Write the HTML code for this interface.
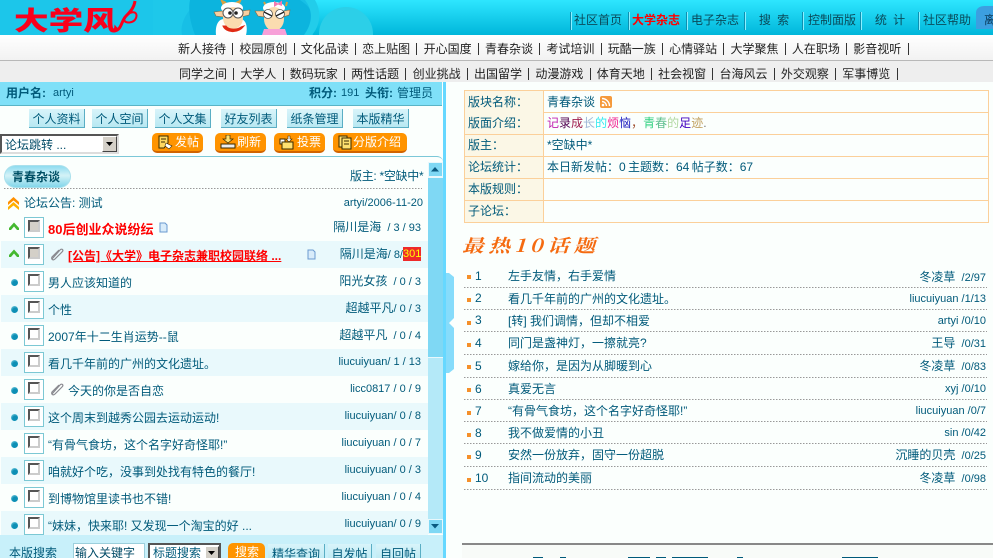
<!DOCTYPE html>
<html lang="zh"><head><meta charset="utf-8"><title>青春杂谈</title>
<style>
*{box-sizing:border-box}
html,body{margin:0;padding:0;width:993px;height:558px;overflow:hidden;background:#fbfffd}
body{position:relative;font:12px/14px "Liberation Sans","WenQuanYi Zen Hei","Noto Sans CJK SC",sans-serif;color:#005a7a}
div,span.a,svg.a{position:absolute}
.t{white-space:nowrap}
.c{font-size:12px}
.nav{left:0;white-space:nowrap;color:#222}
.nav i{display:inline-block;width:1px;height:12px;background:#333;margin:0 6.2px;vertical-align:-2px}
.top{top:13px;width:58px;text-align:center;color:#0a4a5a;white-space:nowrap}
.sep{top:12px;width:2px;height:18px;background:linear-gradient(90deg,#0e8fb0 50%,#8cf0ff 50%)}
.b1{top:109px;height:19px;text-align:center;line-height:20px;background:linear-gradient(#d8f4fa,#b8e8f2);border-right:1px solid #5aaec4;border-bottom:1px solid #5aaec4;color:#005a7a}
.ob{top:133px;height:20px;border-radius:5px;background:#ff9400;border-bottom:2px solid #d26400;color:#fff;line-height:18px;white-space:nowrap}
.ob svg{position:absolute;left:5px;top:2px}
.ob span{position:absolute;top:0}
.r{left:1px;width:427px;height:27px}
.r.k{background:#e9f9fc}
.ball{left:10px;top:11px;width:7px;height:7px;border-radius:50%;background:radial-gradient(circle at 60% 65%,#0d8fb5 40%,#9fe3ef)}
.box{left:23px;top:3px;width:20px;height:21px;border:1px solid #7cc8d4;background:#fff}
.box b{position:absolute;left:3px;top:2px;width:12px;height:12px;border:2px solid;border-color:#555 #ccc #ccc #555;background:#fff}
.box.g b{background:#d4d0c8}
.ti{top:8px;left:47px;white-space:nowrap;color:#005a7a}
.au{top:6px;right:7px;white-space:nowrap;text-align:right;color:#005a7a;font-size:11px}
.arr{left:7px;top:8px}
.clip{left:48px;top:5px}
.cell{left:464px;width:525px;height:23px;border:1px solid #fbd09a;border-top:none}
.cell .h{left:0;top:0;width:79px;height:22px;background:#fbf7e6;border-right:1px solid #fbd09a;padding:4px 0 0 3px;white-space:nowrap;letter-spacing:0}
.cell .v{left:82px;top:4px;white-space:nowrap}
.hr{left:464px;width:523px;height:1px;background-image:linear-gradient(90deg,#999 50%,transparent 50%);background-size:3px 1px}
.sq{left:467px;width:4px;height:4px;background:#f5902a}
.n{left:475px;white-space:nowrap}
.l{left:508px;white-space:nowrap}
.rr{right:7px;white-space:nowrap;text-align:right;font-size:11px}
</style></head><body>

<!-- header -->
<div style="left:0;top:0;width:993px;height:35px;background:linear-gradient(#2ee6ff,#00b6da);overflow:hidden">
<svg class="a" style="left:0;top:0" width="993" height="35" viewBox="0 0 993 35">
<rect x="0" y="0" width="153" height="35" fill="#1cc6ea"/>
<rect x="153" y="0" width="160" height="35" fill="#17bfe6"/>
<path d="M153 0H200C185 12 180 24 182 35H153Z" fill="#1ec8ea"/>
<path d="M190 0H300C318 12 316 26 306 35H195C190 22 188 10 190 0Z" fill="#0cb4de"/>
<path d="M305 0H315C322 12 320 26 312 35H304C312 24 314 12 305 0Z" fill="#22cdea"/>
<ellipse cx="346" cy="34" rx="27" ry="27" fill="#2ccfe8"/>
<!-- logo flourish -->
<path d="M114 31C122 30 121 21 126 16C130 12 134 8 135 1" fill="none" stroke="#f8001c" stroke-width="3"/>
<path d="M124 20C128 10 139 10 136 18C134 23 126 24 124 20" fill="none" stroke="#f8001c" stroke-width="2"/>
<!-- sheep 1 -->
<path d="M224 6L222 1L226 3M238 6L240 1L236 3" fill="none" stroke="#d9a040" stroke-width="2"/>
<ellipse cx="232" cy="8" rx="11" ry="6" fill="#fff"/>
<path d="M223 11L214 12L216 16L224 17ZM242 11L250 10L249 15L241 17Z" fill="#f8cfa0" stroke="#8a6a40" stroke-width=".6"/>
<path d="M216 35C215 26 218 19 224 19H240C246 19 248 27 246 35Z" fill="#fff"/>
<ellipse cx="233" cy="18" rx="10" ry="11" fill="#fbdcb0"/>
<circle cx="228" cy="13" r="5" fill="#fff" stroke="#555" stroke-width="1"/>
<circle cx="238" cy="13" r="5" fill="#fff" stroke="#555" stroke-width="1"/>
<circle cx="230" cy="13" r="1.8" fill="#222"/><circle cx="236" cy="13" r="1.8" fill="#222"/>
<path d="M223 26C226 33 238 34 244 26L241 27C237 30 229 30 226 26Z" fill="#e02a14" stroke="#e02a14"/>
<!-- sheep 2 -->
<path d="M266 6L264 2M286 6L287 2" stroke="#d9a040" stroke-width="2"/>
<ellipse cx="274" cy="8" rx="11" ry="6" fill="#fff"/>
<path d="M274 1L278 3.5L282 0.5V6L278 4.5L274 7Z" fill="#f47ab0"/>
<path d="M264 11L255 11L258 16L265 17ZM284 11L290 10L289 15L283 17Z" fill="#f8cfa0" stroke="#8a6a40" stroke-width=".6"/>
<ellipse cx="274" cy="19" rx="10" ry="12" fill="#fbdcb0"/>
<circle cx="268" cy="14" r="4.5" fill="#fff" stroke="#555" stroke-width=".8"/><circle cx="280" cy="14" r="4.5" fill="#fff" stroke="#555" stroke-width=".8"/>
<path d="M264 12L272 16M276 16L284 12" stroke="#222" stroke-width="1.4"/>
<path d="M262 35L264 29H285L287 35Z" fill="#f7a0d8"/>
<!-- right button -->
<path d="M976 35V13C976 8 980 6 985 6H993V29H976Z" fill="#3c9fe0"/>
</svg>
<div class="t" style="left:14px;top:5px;font:900 26px/30px 'Noto Sans CJK SC',sans-serif;color:#f8001c;transform:scaleX(1.33);transform-origin:0 0">大学风</div>
<div class="sep" style="left:570px"></div><div class="top" style="left:569px">社区首页</div>
<div class="sep" style="left:628px"></div><div class="top" style="left:627px;color:#f00;font-weight:bold">大学杂志</div>
<div class="sep" style="left:686px"></div><div class="top" style="left:686px">电子杂志</div>
<div class="sep" style="left:744px"></div><div class="top" style="left:745px;word-spacing:3px">搜 索</div>
<div class="sep" style="left:802px"></div><div class="top" style="left:803px">控制面版</div>
<div class="sep" style="left:860px"></div><div class="top" style="left:861px;word-spacing:3px">统 计</div>
<div class="sep" style="left:918px"></div><div class="top" style="left:918px">社区帮助</div>
<div class="t" style="left:984px;top:13px;color:#0a3a5a">离</div>
</div>

<!-- sub navs -->
<div style="left:0;top:35px;width:993px;height:25px;background:linear-gradient(#fff,#f2f2f2)"></div>
<div style="left:0;top:60px;width:993px;height:1px;background:#b8b8b8"></div>
<div style="left:0;top:61px;width:993px;height:21px;background:#eeeeee"></div>
<div class="nav" style="left:178px;top:42px">新人接待<i></i>校园原创<i></i>文化品读<i></i>恋上贴图<i></i>开心国度<i></i>青春杂谈<i></i>考试培训<i></i>玩酷一族<i></i>心情驿站<i></i>大学聚焦<i></i>人在职场<i></i>影音视听<i></i></div>
<div class="nav" style="left:179px;top:67px">同学之间<i></i>大学人<i></i>数码玩家<i></i>两性话题<i></i>创业挑战<i></i>出国留学<i></i>动漫游戏<i></i>体育天地<i></i>社会视窗<i></i>台海风云<i></i>外交观察<i></i>军事博览<i></i></div>

<!-- left column -->
<div style="left:0;top:82px;width:442px;height:476px;background:#fbfffd"></div>
<div style="left:443px;top:82px;width:3px;height:476px;background:#66d8ff"></div>
<div style="left:0;top:82px;width:442px;height:24px;background:#7fe0f8;border-bottom:1px solid #5ab4c6"></div>
<div class="t" style="left:6px;top:86px;font-weight:bold">用户名:</div>
<div class="t" style="left:53px;top:86px;font-size:11px">artyi</div>
<div class="t" style="left:309px;top:86px;font-weight:bold">积分:</div>
<div class="t" style="left:341px;top:86px;font-size:11px">191</div>
<div class="t" style="left:365px;top:86px;font-weight:bold">头衔:</div>
<div class="t" style="left:397px;top:86px">管理员</div>

<div class="b1" style="left:29px;width:56px">个人资料</div>
<div class="b1" style="left:92px;width:56px">个人空间</div>
<div class="b1" style="left:155px;width:56px">个人文集</div>
<div class="b1" style="left:221px;width:56px">好友列表</div>
<div class="b1" style="left:287px;width:56px">纸条管理</div>
<div class="b1" style="left:353px;width:56px">本版精华</div>

<div style="left:0;top:134px;width:119px;height:20px;border:2px solid;border-color:#555 #ddd #ddd #555;background:#fff"></div>
<div class="t" style="left:5px;top:138px;color:#004a66">论坛跳转 ...</div>
<div style="left:102px;top:136px;width:15px;height:16px;background:#d4d0c8;border:1px solid;border-color:#fff #444 #444 #fff"></div>
<svg class="a" style="left:106px;top:142px" width="8" height="5"><path d="M0 0H7L3.5 4Z" fill="#000"/></svg>

<div class="ob" style="left:152px;width:51px"><svg width="16" height="15"><path d="M2 1H11V8L7 13H2Z" fill="#ffd860" stroke="#3a2a00"/><path d="M4 4H9M4 7H8" stroke="#3a2a00"/><path d="M9 8L15 11L12 14L8 11Z" fill="#fff" stroke="#3a2a00" stroke-width=".6"/></svg><span style="left:23px">发帖</span></div>
<div class="ob" style="left:215px;width:51px"><svg width="17" height="15"><path d="M6 0H10V4H13L8 8L3 4H6Z" fill="#ffe070" stroke="#3a2a00" stroke-width=".7"/><rect x="1" y="9" width="14" height="4" fill="#eee" stroke="#3a2a00"/></svg><span style="left:22px">刷新</span></div>
<div class="ob" style="left:274px;width:51px"><svg width="16" height="15"><rect x="1" y="4" width="5" height="5" fill="#fff" stroke="#3a2a00"/><rect x="3" y="7" width="11" height="7" fill="#ffe070" stroke="#3a2a00"/><path d="M9 1H11V4H13L10 7L7 4H9Z" fill="#fff" stroke="#3a2a00" stroke-width=".6"/></svg><span style="left:23px">投票</span></div>
<div class="ob" style="left:333px;width:74px"><svg width="14" height="15"><rect x="1" y="1" width="8" height="11" fill="#ffe070" stroke="#3a2a00"/><rect x="4" y="3" width="9" height="11" fill="#ffe070" stroke="#3a2a00"/><path d="M6 6H11M6 9H11" stroke="#3a2a00"/></svg><span style="left:20px">分版介绍</span></div>

<!-- topic panel -->
<div style="left:0;top:156px;width:443px;height:380px;border-top:1px solid #7cc8d8;border-top-right-radius:6px;background:#fbfffd"></div>
<div style="left:4px;top:165px;width:67px;height:23px;border-radius:12px;background:linear-gradient(#8edcf0,#d4f2f7 45%,#82d6ea);border:1px solid #a9e0ec"></div>
<div class="t" style="left:12px;top:170px;font-weight:bold;color:#005066">青春杂谈</div>
<div class="t" style="left:350px;top:169px;letter-spacing:-.3px">版主: *空缺中*</div>
<div style="left:4px;top:188px;width:418px;height:1px;background-image:linear-gradient(90deg,#999 50%,transparent 50%);background-size:3px 1px"></div>

<svg class="a" style="left:7px;top:196px" width="13" height="15"><path d="M1 6L6.5 1L12 6V9L6.5 4.5L1 9Z" fill="#ff9000"/><path d="M1 11L6.5 6L12 11V14L6.5 9.5L1 14Z" fill="#ffb000"/></svg>
<div class="t" style="left:24px;top:196px">论坛公告: 测试</div>
<div class="t" style="right:570px;top:196px;font-size:11px">artyi/2006-11-20</div>

<!-- rows -->
<div class="r" style="top:214px">
<svg class="a arr" width="12" height="8"><path d="M1 6L6 0.5L11 6V8H9L6 4.5L3 8H1Z" fill="#44b830"/></svg>
<div class="box g"><b></b></div>
<div class="ti" style="font-size:13px;font-weight:bold;color:#f00;top:9px">80后创业众说纷纭</div>
<svg class="a" style="left:158px;top:8px" width="9" height="11"><path d="M1 1H6L8 3V10H1Z" fill="#d8ecfa" stroke="#6a9ad0"/></svg>
<div class="au" style="top:6px"><span class="c">隔川是海</span>&nbsp; / 3 / 93</div>
</div>
<div class="r k" style="top:241px">
<svg class="a arr" width="12" height="8"><path d="M1 6L6 0.5L11 6V8H9L6 4.5L3 8H1Z" fill="#44b830"/></svg>
<div class="box g"><b></b></div>
<svg class="a clip" width="15" height="16"><path d="M3 13L11 4C13 2 15 4 13 6L6 13C4 15 2 13 3 11L10 4" fill="none" stroke="#8a8a90" stroke-width="1.2"/></svg>
<div class="ti" style="left:67px;top:8px;width:239px;font-weight:bold;color:#f00;text-decoration:underline;overflow:hidden">[公告]《大学》电子杂志兼职校园联络 ...</div>
<svg class="a" style="left:306px;top:8px" width="9" height="11"><path d="M1 1H6L8 3V10H1Z" fill="#d8ecfa" stroke="#6a9ad0"/></svg>
<div class="au" style="right:25px"><span class="c">隔川是海</span>/ 8/</div>
<div class="t" style="left:402px;top:6px;width:18px;height:14px;background:#ee2a2a;color:#ff0;text-align:center;font-size:11px">301</div>
</div>
<div class="r" style="top:268px"><div class="ball"></div><div class="box"><b></b></div><div class="ti">男人应该知道的</div><div class="au"><span class="c">阳光女孩</span>&nbsp; / 0 / 3</div></div>
<div class="r k" style="top:295px"><div class="ball"></div><div class="box"><b></b></div><div class="ti">个性</div><div class="au"><span class="c">超越平凡</span>/ 0 / 3</div></div>
<div class="r" style="top:322px"><div class="ball"></div><div class="box"><b></b></div><div class="ti">2007年十二生肖运势--鼠</div><div class="au"><span class="c">超越平凡</span>&nbsp; / 0 / 4</div></div>
<div class="r k" style="top:349px"><div class="ball"></div><div class="box"><b></b></div><div class="ti">看几千年前的广州的文化遗址。</div><div class="au">liucuiyuan/ 1 / 13</div></div>
<div class="r" style="top:376px"><div class="ball"></div><div class="box"><b></b></div>
<svg class="a clip" width="15" height="16"><path d="M3 13L11 4C13 2 15 4 13 6L6 13C4 15 2 13 3 11L10 4" fill="none" stroke="#8a8a90" stroke-width="1.2"/></svg>
<div class="ti" style="left:67px">今天的你是否自恋</div><div class="au">licc0817 / 0 / 9</div></div>
<div class="r k" style="top:403px"><div class="ball"></div><div class="box"><b></b></div><div class="ti">这个周末到越秀公园去运动运动!</div><div class="au">liucuiyuan/ 0 / 8</div></div>
<div class="r" style="top:430px"><div class="ball"></div><div class="box"><b></b></div><div class="ti">“有骨气食坊，这个名字好奇怪耶!”</div><div class="au">liucuiyuan / 0 / 7</div></div>
<div class="r k" style="top:457px"><div class="ball"></div><div class="box"><b></b></div><div class="ti">咱就好个吃，没事到处找有特色的餐厅!</div><div class="au">liucuiyuan/ 0 / 3</div></div>
<div class="r" style="top:484px"><div class="ball"></div><div class="box"><b></b></div><div class="ti">到博物馆里读书也不错!</div><div class="au">liucuiyuan / 0 / 4</div></div>
<div class="r k" style="top:511px;height:24px"><div class="ball"></div><div class="box"><b></b></div><div class="ti">“妹妹，快来耶! 又发现一个淘宝的好 ...</div><div class="au">liucuiyuan/ 0 / 9</div></div>

<!-- scrollbar -->
<div style="left:428px;top:162px;width:15px;height:372px;background:#b4e9f8"></div>
<div style="left:428px;top:177px;width:15px;height:181px;background:#7fd8f4;border:1px solid #e8f8fc;border-width:1px 0 1px 0"></div>
<div style="left:428px;top:162px;width:15px;height:15px;background:#7fd8f4;border:1px solid #e8f8fc"></div>
<svg class="a" style="left:431px;top:167px" width="9" height="5"><path d="M0 4.5H8L4 0Z" fill="#0a5a80"/></svg>
<div style="left:428px;top:519px;width:15px;height:15px;background:#7fd8f4;border:1px solid #e8f8fc"></div>
<svg class="a" style="left:431px;top:524px" width="9" height="5"><path d="M0 0H8L4 4.5Z" fill="#0a5a80"/></svg>

<!-- bottom search -->
<div style="left:0;top:535px;width:443px;height:23px;background:#c8f0fa"></div>
<div class="t" style="left:9px;top:546px">本版搜索</div>
<div style="left:73px;top:543px;width:72px;height:20px;background:#fff;border:1px solid #9ccfdc"></div>
<div class="t" style="left:75px;top:546px;color:#004a66">输入关键字</div>
<div style="left:148px;top:543px;width:73px;height:20px;background:#fff;border:2px solid #555"></div>
<div class="t" style="left:153px;top:546px">标题搜索</div>
<div style="left:205px;top:546px;width:14px;height:14px;background:#d4d0c8;border:1px solid;border-color:#fff #444 #444 #fff"></div>
<svg class="a" style="left:208px;top:551px" width="8" height="5"><path d="M0 0H7L3.5 4Z" fill="#000"/></svg>
<div style="left:228px;top:543px;width:37px;height:20px;background:#ff9400;border-radius:5px 5px 0 0"></div>
<div class="t" style="left:235px;top:545px;color:#fff">搜索</div>
<div class="b1" style="left:268px;top:544px;width:57px;height:20px">精华查询</div>
<div class="b1" style="left:328px;top:544px;width:44px;height:20px">自发帖</div>
<div class="b1" style="left:376px;top:544px;width:45px;height:20px">自回帖</div>

<!-- divider handle -->
<svg class="a" style="left:446px;top:273px" width="9" height="101"><path d="M0 0H3L8 4V45L3 50L8 55V96L3 100H0Z" fill="#86dcfb"/></svg>

<!-- right info table -->
<div class="cell" style="top:90px;height:23px;border-top:1px solid #fbd09a"><div class="h">版块名称：</div><div class="v" style="top:4px">青春杂谈</div>
<svg class="a" style="left:135px;top:5px" width="12" height="12"><rect width="12" height="12" rx="2" fill="#f59a3c"/><circle cx="3" cy="9" r="1.3" fill="#fff"/><path d="M2 5.5A4.5 4.5 0 0 1 6.5 10M2 2.5A7.5 7.5 0 0 1 9.5 10" fill="none" stroke="#fff" stroke-width="1.4"/></svg></div>
<div class="cell" style="top:113px;height:22px"><div class="h" style="height:21px;padding-top:3px">版面介绍：</div><div class="v" style="top:3px"><span style="color:#c020b0">记</span><span style="color:#500050">录</span><span style="color:#a02050">成</span><span style="color:#a0b8d8">长</span><span style="color:#30e8f0">的</span><span style="color:#f02090">烦</span><span style="color:#2020c0">恼</span><span style="color:#a05030">，</span><span style="color:#30d080">青</span><span style="color:#60c090">春</span><span style="color:#b0d8a0">的</span><span style="color:#4000c0">足</span><span style="color:#c0a060">迹</span><span style="color:#777">.</span></div></div>
<div class="cell" style="top:135px;height:22px"><div class="h" style="height:21px;padding-top:3px">版主：</div><div class="v" style="top:3px">*空缺中*</div></div>
<div class="cell" style="top:157px;height:22px"><div class="h" style="height:21px;padding-top:3px">论坛统计：</div><div class="v" style="top:3px;word-spacing:-1px">本日新发帖：0 主题数：64 帖子数：67</div></div>
<div class="cell" style="top:179px;height:22px"><div class="h" style="height:21px;padding-top:3px">本版规则：</div></div>
<div class="cell" style="top:201px;height:22px"><div class="h" style="height:21px;padding-top:3px">子论坛：</div></div>

<div class="t" style="left:462px;top:235px;font:italic bold 18px/20px 'Noto Serif CJK SC',serif;color:#f56a10;letter-spacing:4px;transform:scaleX(1.2);transform-origin:0 0">最热10话题</div>

<!-- hot list -->
<div class="sq" style="top:275px"></div><div class="n" style="top:269px">1</div><div class="l" style="top:269px">左手友情，右手爱情</div><div class="rr" style="top:270px"><span class="c">冬凌草</span>&nbsp; /2/97</div><div class="hr" style="top:287px"></div>
<div class="sq" style="top:298px"></div><div class="n" style="top:291px">2</div><div class="l" style="top:292px">看几千年前的广州的文化遗址。</div><div class="rr" style="top:292px">liucuiyuan /1/13</div><div class="hr" style="top:309px"></div>
<div class="sq" style="top:321px"></div><div class="n" style="top:313px">3</div><div class="l" style="top:314px">[转] 我们调情，但却不相爱</div><div class="rr" style="top:314px">artyi /0/10</div><div class="hr" style="top:331px"></div>
<div class="sq" style="top:343px"></div><div class="n" style="top:336px">4</div><div class="l" style="top:336px">同门是盏神灯，一擦就亮?</div><div class="rr" style="top:336px"><span class="c">王导</span>&nbsp; /0/31</div><div class="hr" style="top:354px"></div>
<div class="sq" style="top:365px"></div><div class="n" style="top:359px">5</div><div class="l" style="top:359px">嫁给你，是因为从脚暖到心</div><div class="rr" style="top:359px"><span class="c">冬凌草</span>&nbsp; /0/83</div><div class="hr" style="top:377px"></div>
<div class="sq" style="top:388px"></div><div class="n" style="top:382px">6</div><div class="l" style="top:382px">真爱无言</div><div class="rr" style="top:382px">xyj /0/10</div><div class="hr" style="top:399px"></div>
<div class="sq" style="top:411px"></div><div class="n" style="top:404px">7</div><div class="l" style="top:404px">“有骨气食坊，这个名字好奇怪耶!”</div><div class="rr" style="top:404px">liucuiyuan /0/7</div><div class="hr" style="top:421px"></div>
<div class="sq" style="top:433px"></div><div class="n" style="top:426px">8</div><div class="l" style="top:426px">我不做爱情的小丑</div><div class="rr" style="top:426px">sin /0/42</div><div class="hr" style="top:443px"></div>
<div class="sq" style="top:455px"></div><div class="n" style="top:448px">9</div><div class="l" style="top:448px">安然一份放弃，固守一份超脱</div><div class="rr" style="top:448px"><span class="c">沉睡的贝壳</span>&nbsp; /0/25</div><div class="hr" style="top:466px"></div>
<div class="sq" style="top:478px"></div><div class="n" style="top:471px">10</div><div class="l" style="top:471px">指间流动的美丽</div><div class="rr" style="top:471px"><span class="c">冬凌草</span>&nbsp; /0/98</div><div class="hr" style="top:489px"></div>

<!-- footer rule -->
<div style="left:462px;top:543px;width:531px;height:2px;background:#888"></div>
<div style="left:462px;top:545px;width:531px;height:13px;background:#f8fbf8"></div>
<div style="left:533px;top:557px;width:10px;height:1px;background:#005a7a"></div>
<div style="left:560px;top:557px;width:6px;height:1px;background:#005a7a"></div>
<div style="left:628px;top:557px;width:22px;height:1px;background:#005a7a"></div>
<div style="left:656px;top:557px;width:10px;height:1px;background:#005a7a"></div>
<div style="left:672px;top:557px;width:36px;height:1px;background:#005a7a"></div>
<div style="left:737px;top:557px;width:6px;height:1px;background:#005a7a"></div>
<div style="left:842px;top:557px;width:36px;height:1px;background:#005a7a"></div>
</body></html>
